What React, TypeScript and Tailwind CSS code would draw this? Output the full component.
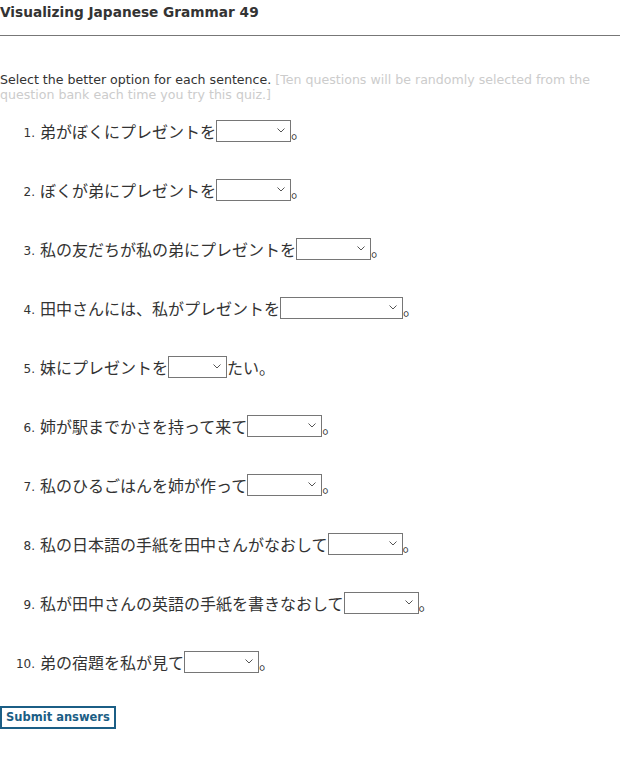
const questions: { before: string; after: string; width: number }[] = [
  { before: "弟がぼくにプレゼントを", after: "。", width: 75 },
  { before: "ぼくが弟にプレゼントを", after: "。", width: 75 },
  { before: "私の友だちが私の弟にプレゼントを", after: "。", width: 75 },
  { before: "田中さんには、私がプレゼントを", after: "。", width: 123 },
  { before: "妹にプレゼントを", after: "たい。", width: 59 },
  { before: "姉が駅までかさを持って来て", after: "。", width: 75 },
  { before: "私のひるごはんを姉が作って", after: "。", width: 75 },
  { before: "私の日本語の手紙を田中さんがなおして", after: "。", width: 75 },
  { before: "私が田中さんの英語の手紙を書きなおして", after: "。", width: 75 },
  { before: "弟の宿題を私が見て", after: "。", width: 75 },
];

const widthClass: Record<number, string> = {
  59: "w-[59px]",
  75: "w-[75px]",
  123: "w-[123px]",
};

const jp = { fontFamily: '"Noto Sans CJK JP", sans-serif' };

export default function App() {
  return (
    <main
      className="min-h-screen bg-white text-[#333]"
      style={{ fontFamily: '"DejaVu Sans", Verdana, "Noto Sans CJK JP", sans-serif' }}
    >
      <h1 className="pt-[3px] text-[13.7px] font-bold leading-[18px] text-[#333]">
        Visualizing Japanese Grammar 49
      </h1>
      <hr className="mt-[14px] border-t border-[#777]" />

      <p className="mt-[36px] text-[12.6px] leading-[15px]">
        Select the better option for each sentence.{" "}
        <span className="text-[#ccc]">
          [Ten questions will be randomly selected from the question bank each time you try this quiz.]
        </span>
      </p>

      <ol className="mt-[18px]">
        {questions.map((q, i) => (
          <li key={i} className="flex h-[22px] items-center mb-[37px] last:mb-[33px]">
            <span className="mt-[4px] w-[40px] pr-[5px] text-right text-[12px]">{i + 1}.</span>
            <span className="text-[16px]" style={jp}>
              {q.before}
            </span>
            <span className="relative">
              <select
                className={`block h-[22px] ${widthClass[q.width]} appearance-none border border-[#767676] bg-white text-[13px]`}
                defaultValue=""
              >
                <option value=""></option>
              </select>
              <svg
                className="pointer-events-none absolute right-[6px] top-[8px]"
                width="8"
                height="5"
                viewBox="0 0 8 5"
              >
                <path d="M0.5 0.5 L4 4 L7.5 0.5" fill="none" stroke="#555" strokeWidth="1" />
              </svg>
            </span>
            <span className="text-[16px]" style={jp}>
              {q.after}
            </span>
          </li>
        ))}
      </ol>

      <button className="block h-[23px] border-2 border-[#1b5e85] px-[4px] text-[11.5px] font-bold text-[#1b5e85]">
        Submit answers
      </button>
    </main>
  );
}
